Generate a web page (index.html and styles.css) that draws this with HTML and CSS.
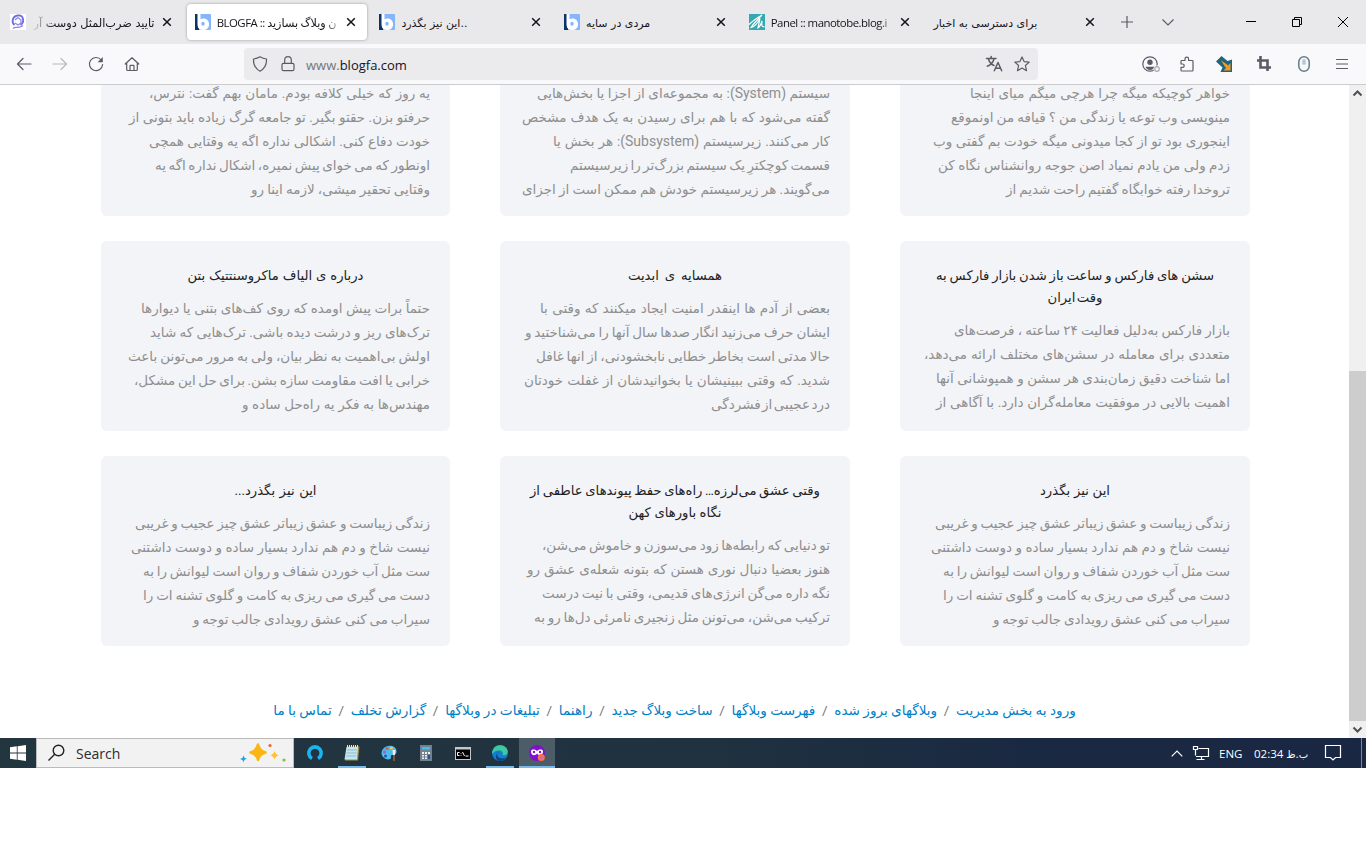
FILE: index.html
```html
<!DOCTYPE html>
<html lang="fa">
<head>
	<meta charset="utf-8">
	<title>BLOGFA :: وبلاگ بسازید</title>
	<link rel="stylesheet" href="styles.css">
</head>
<body>
<svg class="defs">
	<symbol id="blogfa" viewBox="0 0 16 16">
		<rect width="16" height="16" rx="1" fill="#84b6fb"/>
		<path d="M0 0h4v16H0z" fill="#0d3469"/>
		<path d="M2.500 0h3v10l1 5.500C4 15.500 2.500 13 2.500 10z" fill="#fff"/>
		<path d="M5 5.500c5-2.500 9 .3 9 4.700S11 16 8 16c-2 0-3.500-.8-5-3z" fill="#fff"/>
		<ellipse cx="8" cy="9.800" rx="1.700" ry="2" fill="#84b6fb"/>
	</symbol>
	<symbol id="close" viewBox="0 0 10 10">
		<path d="M1.200 1.200l7.600 7.600M8.800 1.200L1.200 8.800" fill="none" stroke="#15141a" stroke-width="1.500"/>
	</symbol>
</svg>

<div class="tabbar">
	<div class="tab">
		<svg class="favicon" viewBox="0 0 16 16"><rect width="16" height="16" fill="#fff"/><path d="M4.500 11C1 8 2.500 2 8 1.500S15 8 10.500 11" fill="none" stroke="#6d6ce0" stroke-width="1.800"/><path d="M5 6l3-2.500L11 6v3l-3 2-3-2M3 14.500c3-3 5 1 10-3" fill="none" stroke="#8b89e6" stroke-width="1.300"/></svg>
		<span class="label rtl fade-left"><span class="t1">تایید ضرب‌المثل دوست آر</span></span>
		<svg class="x"><use href="#close"/></svg>
	</div>
	<div class="tab active">
		<svg class="favicon"><use href="#blogfa"/></svg>
		<span class="label fade-right"><span class="lat">BLOGFA :: </span><span class="t2">ن وبلاگ بسازید</span></span>
		<svg class="x"><use href="#close"/></svg>
	</div>
	<div class="tab">
		<svg class="favicon"><use href="#blogfa"/></svg>
		<span class="label"><span class="t3">این نیز بگذرد..</span></span>
		<svg class="x"><use href="#close"/></svg>
	</div>
	<div class="tab">
		<svg class="favicon"><use href="#blogfa"/></svg>
		<span class="label"><span class="t4">مردی در سایه</span></span>
		<svg class="x"><use href="#close"/></svg>
	</div>
	<div class="tab">
		<svg class="favicon" viewBox="0 0 16 16"><rect width="16" height="16" fill="#35a9b0"/><path d="M0 10.500C5 6 9 3 13 1 9 5 5 9 2 13.500c4-1 7-5 9-9L9 14c2-1 3-4 4-7-.5 4-.5 6 2.500 6" fill="none" stroke="#fff" stroke-width="1.200"/></svg>
		<span class="label fade-right"><span class="lat">Panel :: manotobe.blog.i</span></span>
		<svg class="x"><use href="#close"/></svg>
	</div>
	<div class="tab">
		<span class="label"><span class="t6">برای دسترسی به اخبار</span></span>
		<svg class="x"><use href="#close"/></svg>
	</div>
	<svg class="newtab" viewBox="0 0 12 12"><path d="M6 0v12M0 6h12"/></svg>
	<svg class="alltabs" viewBox="0 0 12 7"><path d="M.5.500L6 6 11.500.500"/></svg>
	<div class="wincontrols">
		<svg width="10" height="10"><path d="M0 4.500h10"/></svg>
		<svg width="10" height="10"><path d="M.5 2.500h7v7h-7zM2.500 2.500v-2h7v7h-2"/></svg>
		<svg width="10" height="10"><path d="M0 0l10 10M10 0L0 10"/></svg>
	</div>
</div>

<div class="toolbar">
	<div class="nav">
		<svg width="16" height="16"><path d="M15 8H1.500M7 2.500L1.500 8 7 13.500"/></svg>
		<svg width="16" height="16" class="off"><path d="M1 8h13.500M9 2.500L14.500 8 9 13.500"/></svg>
		<svg width="16" height="16"><path d="M13.200 4A6.600 6.600 0 1 0 14.600 8.500"/><path d="M14.800 1v5.200H9.600z" fill="#5b5b66" stroke="none"/></svg>
		<svg width="16" height="16"><path d="M1.200 8L8 1.700 14.800 8M2.700 7v6.500q0 1 1 1h8.600q1 0 1-1V7M6 14.500V10q0-.7.700-.7h2.600q.7 0 .7.700v4.500"/></svg>
	</div>
	<div class="urlbar">
		<svg width="16" height="16"><path d="M8 .8c2 1.200 4 1.900 6.500 2.200.3 5.500-1.500 9.500-6.500 12.200C3 12.500 1.200 8.500 1.500 3 4 2.700 6 2 8 .8z"/></svg>
		<svg width="16" height="16"><path d="M3.500 7.300h9q1.500 0 1.500 1.500v4.400q0 1.500-1.500 1.500h-9q-1.500 0-1.500-1.500V8.800q0-1.500 1.500-1.500zM4.700 7V4a3.300 3.300 0 0 1 6.600 0v3"/></svg>
		<span class="url"><span class="sub">www.</span>blogfa.com</span>
		<svg width="16" height="16"><path d="M.5 2.500h9.500M5.200.5v2M2.500 3c1 3.500 3 5.500 5.500 6.500M8 3C7 6.500 4.500 9 1.300 10.300M8.300 14.800L12 6.500l3.700 8.300M9.600 12.300h4.800" stroke-width="1.500"/></svg>
		<svg width="16" height="16"><path d="M8 .9l2.100 4.700 5.100.5-3.800 3.400 1.100 5.200L8 12.100l-4.500 2.600 1.100-5.200L.8 6.100l5.100-.5z"/></svg>
	</div>
	<div class="tools">
		<svg width="18" height="16"><circle cx="8" cy="8" r="7.200"/><circle cx="8" cy="6.300" r="2.700" fill="#5b5b66" stroke="none"/><path d="M3.500 10.700h9c-1 2.200-2.500 3.300-4.500 3.300s-3.500-1.100-4.500-3.300z" fill="#5b5b66" stroke="none"/><circle cx="15" cy="13" r="3.500" fill="#f9f9fb" stroke="none"/><circle cx="15" cy="13" r="2.300" stroke="#a9a9b0"/></svg>
		<svg width="16" height="16"><path d="M2 5.300q0-.8.800-.8H6V3a1.800 1.800 0 0 1 3.600 0v1.500h3.600q.8 0 .8.800v8.900q0 .8-.8.800H2.800q-.8 0-.8-.8v-2.800h1.500a1.700 1.700 0 0 0 0-3.400H2z"/></svg>
		<svg width="16" height="16"><path d="M0 5.500L5.500 0l6 5 4.500-1.500V16H4.500l2-4.500z" fill="#22637e" stroke="none"/><path d="M5 4.500l5.500 3.500 1.500 1.500 2.500-2.500v7.500H7.500l2.500-2.500-1.500-2z" fill="#f39a1e" stroke="none"/></svg>
		<svg width="16" height="16"><path d="M4.500 1.300v10.200h9.200M2.300 4.500h9.200v9.200" stroke-width="2.600" stroke-linecap="square" stroke-linejoin="miter"/></svg>
		<svg width="16" height="16"><rect x="2.800" y=".8" width="10.400" height="14.400" rx="5.200" stroke="#607d8b" stroke-width="1.500"/><rect x="6.200" y="3" width="3.600" height="6" rx="1.800" fill="#b9c9d1" stroke="none"/></svg>
		<svg width="16" height="16"><path d="M2.500 3.500h11M2.500 8h11M2.500 12.500h11"/></svg>
	</div>
</div>

<div class="viewport">
	<div class="page">
		<div class="posts">
			<div class="card cut">
				<p><span style="width:260px">خواهر کوچیکه میگه چرا هرچی میگم میای اینجا</span><span style="width:279px">مینویسی وب توعه یا زندگی من ؟ قیافه من اونموقع</span><span style="width:297px">اینجوری بود تو از کجا میدونی میگه خودت بم گفتی وب</span><span style="width:292px">زدم ولی من یادم نمیاد اصن جوجه روانشناس نگاه کن</span><span style="width:224px">تروخدا رفته خوابگاه گفتیم راحت شدیم از</span></p>
			</div>
			<div class="card cut">
				<p><span style="width:293px">سیستم <b>(System)</b>: به مجموعه‌ای از اجزا یا بخش‌هایی</span><span style="width:308px">گفته می‌شود که با هم برای رسیدن به یک هدف مشخص</span><span style="width:277px">کار می‌کنند. زیرسیستم <b>(Subsystem)</b>: هر بخش یا</span><span style="width:260px">قسمت کوچکترِ یک سیستم بزرگ‌تر را زیرسیستم</span><span style="width:308px">می‌گویند. هر زیرسیستم خودش هم ممکن است از اجزای</span></p>
			</div>
			<div class="card cut">
				<p><span style="width:281px">یه روز که خیلی کلافه بودم. مامان بهم گفت: نترس،</span><span style="width:301px">حرفتو بزن. حقتو بگیر. تو جامعه گرگ زیاده باید بتونی از</span><span style="width:281px">خودت دفاع کنی. اشکالی نداره اگه یه وقتایی همچی</span><span style="width:275px">اونطور که می خوای پیش نمیره، اشکال نداره اگه یه</span><span style="width:179px">وقتایی تحقیر میشی، لازمه اینا رو</span></p>
			</div>
			<div class="card">
				<h3><span style="width:278px">سشن های فارکس و ساعت باز شدن بازار فارکس به</span><span style="width:55px">وقت ایران</span></h3>
				<p><span style="width:276px">بازار فارکس به‌دلیل فعالیت ۲۴ ساعته ، فرصت‌های</span><span style="width:306px">متعددی برای معامله در سشن‌های مختلف ارائه می‌دهد،</span><span style="width:294px">اما شناخت دقیق زمان‌بندی هر سشن و همپوشانی آنها</span><span style="width:294px">اهمیت بالایی در موفقیت معامله‌گران دارد. با آگاهی از</span></p>
			</div>
			<div class="card">
				<h3><span style="width:94px">همسایه ی ابدیت</span></h3>
				<p><span style="width:290px">بعضی از آدم ها اینقدر امنیت ایجاد میکنند که وقتی با</span><span style="width:305px">ایشان حرف می‌زنید انگار صدها سال آنها را می‌شناختید و</span><span style="width:294px">حالا مدتی است بخاطر خطایی نابخشودنی، از انها غافل</span><span style="width:306px">شدید. که وقتی ببینیشان یا بخوانیدشان از غفلت خودتان</span><span style="width:119px">درد عجیبی از فشردگی</span></p>
			</div>
			<div class="card">
				<h3><span style="width:176px">درباره ی الیاف ماکروسنتتیک بتن</span></h3>
				<p><span style="width:289px">حتماً برات پیش اومده که روی کف‌های بتنی یا دیوارها</span><span style="width:280px">ترک‌های ریز و درشت دیده باشی. ترک‌هایی که شاید</span><span style="width:302px">اولش بی‌اهمیت به نظر بیان، ولی به مرور می‌تونن باعث</span><span style="width:296px">خرابی یا افت مقاومت سازه بشن. برای حل این مشکل،</span><span style="width:188px">مهندس‌ها به فکر یه راه‌حل ساده و</span></p>
			</div>
			<div class="card">
				<h3><span style="width:70px">این نیز بگذرد</span></h3>
				<p><span style="width:295px">زندگی زیباست و عشق زیباتر عشق چیز عجیب و غریبی</span><span style="width:299px">نیست شاخ و دم هم ندارد بسیار ساده و دوست داشتنی</span><span style="width:287px">ست مثل آب خوردن شفاف و روان است لیوانش را به</span><span style="width:287px">دست می گیری می ریزی به کامت و گلوی تشنه ات را</span><span style="width:237px">سیراب می کنی عشق رویدادی جالب توجه و</span></p>
			</div>
			<div class="card">
				<h3><span style="width:290px">وقتی عشق می‌لرزه… راه‌های حفظ پیوندهای عاطفی از</span><span style="width:93px">نگاه باورهای کهن</span></h3>
				<p><span style="width:288px">تو دنیایی که رابطه‌ها زود می‌سوزن و خاموش می‌شن،</span><span style="width:303px">هنوز بعضیا دنبال نوری هستن که بتونه شعله‌ی عشق رو</span><span style="width:288px">نگه داره می‌گن انرژی‌های قدیمی، وقتی با نیت درست</span><span style="width:296px">ترکیب می‌شن، می‌تونن مثل زنجیری نامرئی دل‌ها رو به</span></p>
			</div>
			<div class="card">
				<h3><span style="width:82px">این نیز بگذرد...</span></h3>
				<p><span style="width:295px">زندگی زیباست و عشق زیباتر عشق چیز عجیب و غریبی</span><span style="width:299px">نیست شاخ و دم هم ندارد بسیار ساده و دوست داشتنی</span><span style="width:287px">ست مثل آب خوردن شفاف و روان است لیوانش را به</span><span style="width:287px">دست می گیری می ریزی به کامت و گلوی تشنه ات را</span><span style="width:237px">سیراب می کنی عشق رویدادی جالب توجه و</span></p>
			</div>
		</div>
		<div class="footer">
			<a>ورود به بخش مدیریت</a><i>/</i><a>وبلاگهای بروز شده</a><i>/</i><a>فهرست وبلاگها</a><i>/</i><a>ساخت وبلاگ جدید</a><i>/</i><a>راهنما</a><i>/</i><a>تبلیغات در وبلاگها</a><i>/</i><a>گزارش تخلف</a><i>/</i><a>تماس با ما</a>
		</div>
	</div>
	<div class="scrollbar">
		<svg viewBox="0 0 17 17"><path d="M4.500 10.500l4-4 4 4"/></svg>
		<div class="thumb"></div>
		<svg viewBox="0 0 17 17"><path d="M4.500 6.500l4 4 4-4"/></svg>
	</div>
</div>

<div class="taskbar">
	<div class="start"><svg width="16" height="16"><path d="M0 2.300L6.800 1.300v6.300H0zM7.600 1.200L16 0v7.600H7.600zM0 8.400h6.800v6.300L0 13.700zM7.600 8.400H16V16l-8.400-1.200z" fill="#fff"/></svg></div>
	<div class="search">
		<svg width="18" height="18" viewBox="0 0 18 18"><circle cx="10.500" cy="6.500" r="5.300" fill="none" stroke="#222" stroke-width="1.400"/><path d="M6.700 10.300L.5 16.500" stroke="#222" stroke-width="1.400"/></svg>
		<span>Search</span>
		<svg class="sparkles" width="48" height="22" viewBox="0 0 48 22"><path d="M19 2.500q1.500 6 7.500 8-6 1.500-7.500 7.500-1.500-6-7.500-7.500 6-2 7.500-8z" fill="#fbb615" stroke="#fbb615" stroke-width="2.500" stroke-linejoin="round"/><path d="M35.500 9q.8 3.500 4.500 4.300-3.700.8-4.500 4.200-.8-3.400-4.500-4.200 3.700-.8 4.500-4.300z" fill="#fdc130"/><path d="M4.500 13.500l1 2.200 2.300 1-2.300 1-1 2.600-1-2.300-2.500-1 2.500-1z" fill="#13a3e8"/><circle cx="31" cy="3.500" r="1.600" fill="#ee6037"/><circle cx="45" cy="18" r="1.600" fill="#7bc142"/></svg>
	</div>
	<div class="apps">
		<div class="app"><svg width="16" height="16"><path d="M5 13.500A6.200 6.200 0 1 1 11 13.500" fill="none" stroke="#18b6f1" stroke-width="3.600"/></svg></div>
		<div class="app open"><svg width="16" height="16"><path d="M3 1.500h12.500L14 15.500H1z" fill="#a38a4c"/><path d="M2.500 2H14l-1 12.500H.5z" fill="#c3e6ee"/><path d="M3 5h10M2.600 8h10M2.200 11h10" stroke="#7eb1c4" stroke-width=".8"/><path d="M3 1h11" stroke="#e8e8e8" stroke-width="2" stroke-dasharray="1 1"/></svg></div>
		<div class="app"><svg width="16" height="16"><path d="M2 4C6-1 15 0 15.500 6c.3 4-3 4-4.500 4s-1 2-1 3-3 2-5 1C1 12.500-1 8 2 4z" fill="#4cbcef"/><circle cx="3.500" cy="7" r="1.500" fill="#a958c8"/><circle cx="6" cy="3.500" r="1.500" fill="#e9553f"/><circle cx="10.500" cy="3" r="1.500" fill="#f4cb35"/><circle cx="4.500" cy="11" r="1.500" fill="#2257a2"/><path d="M11.500 5h3l-.5 5h-2z" fill="#eee"/><path d="M13 10v6" stroke="#8a5b35" stroke-width="1.800"/></svg></div>
		<div class="app"><svg width="16" height="16"><path d="M2 0h12v16H2z" fill="#72818d"/><path d="M4 2h8v2.500H4z" fill="#45bdf2"/><path d="M4 7h2v2H4zM7 7h2v2H7zM10 7h2v2h-2zM4 10h2v1.500H4zM7 10h2v1.500H7zM4 12.500h2V14H4zM7 12.500h2V14H7z" fill="#eee"/><path d="M10 10h2v4h-2z" fill="#155a9f"/></svg></div>
		<div class="app"><svg width="16" height="13"><path d="M0 0h16v13H0z" fill="#c3c7c9"/><path d="M1 2.500h14V12H1z" fill="#000"/><path d="M4.500 5.500H2.500v3h2M6 6v.7M6 8v.7M7.500 5l2 4M10.500 9h3" stroke="#fff" fill="none"/></svg></div>
		<div class="app open"><svg width="16" height="16"><circle cx="8" cy="8" r="8" fill="#1180d0"/><path d="M1.500 4C4-1 13-1 15.500 5c1 4-2 6-5 5 1-2 0-4-2.500-4.500C5 5 2.500 6 .3 9 0 7 .5 5.500 1.500 4z" fill="#3fc89c"/><path d="M5 9c0 4 4 5.500 9 3.500-2 3-5 3.800-7.500 3.300C3 14 3 9 7 7c-1.300 0-2 1-2 2z" fill="#12417f"/></svg></div>
		<div class="app open current"><svg width="16" height="16"><circle cx="8" cy="8" r="8" fill="#7e12cf"/><path d="M2 6.500C2 4 5.500 4 8 6c2.500-2 6-2 6 .5 0 4.500-4.500 4.500-6 2-1.500 2.500-6 2.500-6-2z" fill="#fff"/><circle cx="5" cy="7" r="1.200" fill="#7e12cf"/><circle cx="11" cy="7" r="1.200" fill="#7e12cf"/><circle cx="12.300" cy="12.500" r="3.500" fill="#ff7139"/><circle cx="12.500" cy="12.700" r="1.400" fill="#b06bff"/></svg></div>
	</div>
	<div class="tray">
		<svg width="12" height="7"><path d="M.7 6.300L6 1l5.300 5.300"/></svg>
		<svg width="16" height="14"><path d="M5.500 2.500h10v8H3M3.500 13.500h8M8.500 10.500v3M.5.500h4v3h-4zM2.500 3.500v6"/></svg>
		<span class="lang">ENG</span>
		<span class="clock">02:34 <bdi>ب.ظ</bdi></span>
		<svg width="16" height="16"><path d="M.5.500h15v12h-5L8 15l-2.500-2.500h-5z"/></svg>
		<span class="peek"></span>
	</div>
</div>
</body>
</html>
```

FILE: styles.css
```css
body {
	margin: 0;
	background: #fff;
	font-family: "Open Sans", "DejaVu Sans", sans-serif;
	color: #15141a;
}
svg { flex: none; display: block; overflow: visible; }
.defs { width: 0; height: 0; display: none; }

/* tabs */
.tabbar {
	display: flex;
	align-items: center;
	height: 44px;
	padding-left: 2px;
	box-sizing: border-box;
	background: #e9e9eb;
}
.tab {
	display: flex;
	align-items: center;
	width: 180.500px;
	height: 36px;
	margin-right: 4.200px;
	padding: 0 11px 0 8px;
	box-sizing: border-box;
	border-radius: 4px;
	flex: none;
}
.tab.active { background: #fff; box-shadow: 0 0 3px rgba(0,0,0,.35); }
.favicon { width: 16px; height: 16px; margin-right: 6px; }
.label {
	flex: 1;
	min-width: 0;
	padding-top: 2px;
	white-space: nowrap;
	font-size: 11px;
	line-height: 20px;
}
.rtl { direction: rtl; margin-right: 1px; }
.fade-right { -webkit-mask-image: linear-gradient(to left, transparent 0, #000 18px); }
.fade-left { -webkit-mask-image: linear-gradient(to right, transparent 0, #000 22px); }
.x { width: 10px; height: 10px; margin-left: 3px; }
.fade-right + .x { margin-left: 0; }
.fade-right { margin-right: 3px; }
.rtl + .x { margin-left: 6px; }
.lat { font-size: 11.400px; letter-spacing: -.5px; }
.t1, .t2, .t3, .t4, .t6 { font-family: "DejaVu Sans", sans-serif; font-size: 11px; }
.t1 { font-size: 11.300px; }
.t2 { font-size: 11.200px; word-spacing: -1px; }
.newtab { width: 12px; height: 12px; margin-left: 11px; }
.alltabs { width: 12px; height: 7px; margin-left: 29px; }
.newtab path, .alltabs path { fill: none; stroke: #5b5b66; stroke-width: 1.200; }
.wincontrols { display: flex; gap: 36px; margin-left: auto; padding-right: 18px; }
.wincontrols path { fill: none; stroke: #000; }

/* navigation bar */
.toolbar {
	display: flex;
	align-items: center;
	height: 41px;
	padding-right: 16px;
	box-sizing: border-box;
	background: #f9f9fb;
	border-bottom: 1px solid #ccccce;
}
.toolbar svg { fill: none; stroke: #5b5b66; stroke-width: 1.200; stroke-linecap: round; stroke-linejoin: round; }
.nav { display: flex; gap: 20px; width: 228px; padding-left: 16px; }
.nav .off { opacity: .4; }
.urlbar {
	display: flex;
	align-items: center;
	width: 794px;
	height: 32px;
	padding: 0 8px;
	gap: 12px;
	box-sizing: border-box;
	border-radius: 4px;
	background: #ebebed;
}
.url { flex: 1; margin-left: -2px; padding-top: 2px; font-size: 13px; }
.sub { color: #75757c; }
.tools { display: flex; gap: 22px; margin-left: auto; }
.tools svg:nth-child(1) { margin-right: -3px; }
.tools svg:nth-child(2) { margin-right: -1px; }
.tools svg:nth-child(3), .tools svg:nth-child(4) { margin-right: 2px; }

/* page */
.viewport { display: flex; height: 653px; overflow: hidden; }
.page {
	flex: 1;
	overflow: hidden;
	direction: rtl;
	font-family: Roboto, "DejaVu Sans", sans-serif;
}
.posts {
	display: grid;
	grid-template-columns: 350px 350px 349px;
	grid-template-rows: 131px 190px 190px;
	gap: 25px 50px;
	margin-right: 99px;
}
.card {
	padding: 24px 20px 0;
	border-radius: 6px;
	background: #f3f4f8;
}
.card.cut { padding-top: 0; border-radius: 0 0 6px 6px; }
.card.cut p { margin-top: -4px; }
.card span {
	display: block;
	height: 24px;
	word-spacing: -2px;
	text-align: justify;
	text-align-last: justify;
	white-space: nowrap;
}
.card h3 {
	margin: 0 0 9px;
	font-size: 13.200px;
	line-height: 22px;
	font-weight: normal;
	color: #222;
}
.card h3 span { margin: 0 auto; height: 22px; }
.card p {
	margin: 0;
	font-size: 13.500px;
	line-height: 24px;
	color: #8f8f8f;
}
.card b { font-weight: normal; font-size: 14px; line-height: 0; }
.footer {
	display: flex;
	justify-content: center;
	margin-top: 52px;
	font-size: 13.600px;
	line-height: 24px;
	color: #0080c6;
}
.footer i { width: 19px; text-align: center; font-style: normal; color: #777; }

.scrollbar {
	display: flex;
	flex-direction: column;
	width: 17px;
	background: #f0f0f0;
}
.scrollbar svg { width: 17px; height: 17px; }
.scrollbar path { fill: none; stroke: #505050; stroke-width: 2; }
.thumb { flex: 0 0 350px; margin-top: auto; background: #cdcdcd; }

/* taskbar */
.taskbar {
	display: flex;
	height: 30px;
	background: linear-gradient(to right, #22363f, #20323f 50%, #1a2942 75%, #1a2742);
	color: #fff;
}
.start { display: flex; width: 36px; align-items: center; justify-content: center; }
.search {
	display: flex;
	align-items: center;
	width: 258px;
	box-sizing: border-box;
	padding: 0 6px 0 11px;
	border: 1px solid #bbb;
	background: #f2f2f2;
	color: #2b2b2b;
	font-size: 14px;
}
.search span { margin-left: 10px; }
.sparkles { margin-left: auto; }
.apps { display: flex; gap: 1px; padding-left: 3px; }
.app { display: flex; align-items: center; justify-content: center; width: 36px; height: 30px; }
.open { background: linear-gradient(#76b9ed, #76b9ed) center bottom / 28px 2px no-repeat; }
.current { background-size: 36px 2px; background-color: #4d5d67; }
.tray { display: flex; align-items: center; margin-left: auto; font-size: 11.500px; }
.tray path { fill: none; stroke: #fff; stroke-width: 1.200; }
.tray svg + svg { margin-left: 10px; }
.lang { margin-left: 10px; width: 35px; }
.clock { width: 71px; white-space: nowrap; }
.clock bdi { font-family: "DejaVu Sans", sans-serif; font-size: 10px; }
.peek { width: 4px; height: 30px; margin-left: 20px; border-left: 1px solid #7d8796; }
```
